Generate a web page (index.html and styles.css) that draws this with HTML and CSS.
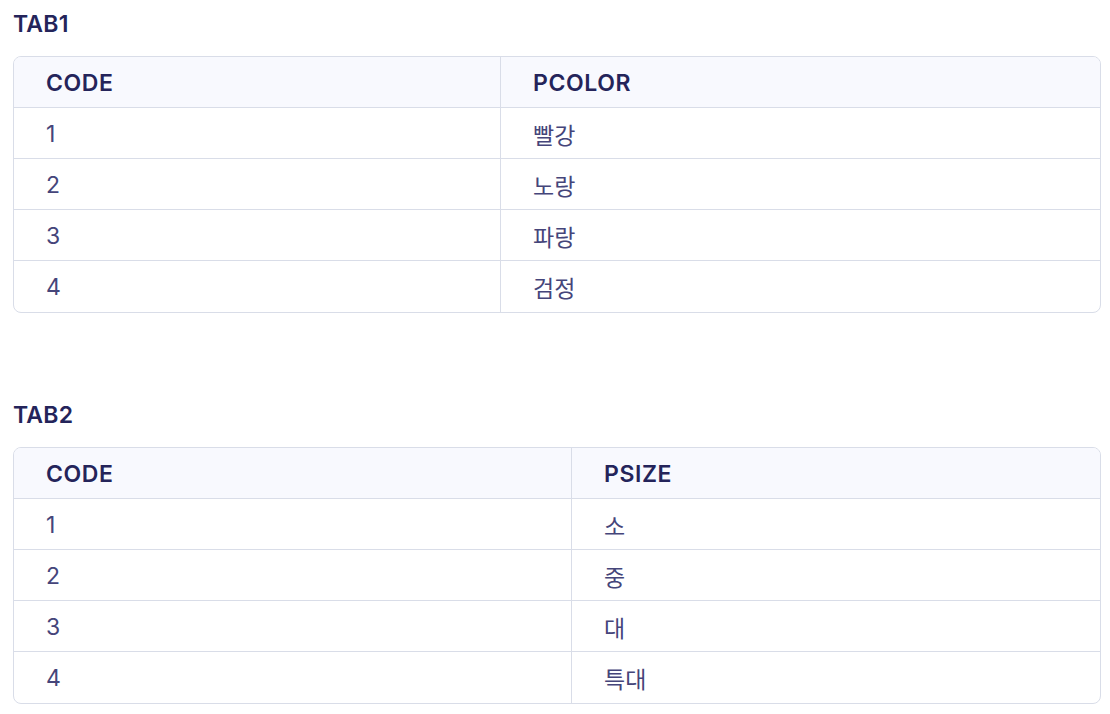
FILE: index.html
```html
<!DOCTYPE html>
<html lang="ko">
<head>
<meta charset="utf-8">
<title>Tables</title>
<link rel="stylesheet" href="styles.css">
</head>
<body>
<section class="block">
  <h2 class="title">TAB1</h2>
  <table class="grid">
    <colgroup><col class="c1 c1-tab1"><col></colgroup>
    <thead><tr><th>CODE</th><th>PCOLOR</th></tr></thead>
    <tbody>
      <tr><td>1</td><td>빨강</td></tr>
      <tr><td>2</td><td>노랑</td></tr>
      <tr><td>3</td><td>파랑</td></tr>
      <tr><td>4</td><td>검정</td></tr>
    </tbody>
  </table>
</section>
<section class="block block-2">
  <h2 class="title">TAB2</h2>
  <table class="grid">
    <colgroup><col class="c1 c1-tab2"><col></colgroup>
    <thead><tr><th>CODE</th><th>PSIZE</th></tr></thead>
    <tbody>
      <tr><td>1</td><td>소</td></tr>
      <tr><td>2</td><td>중</td></tr>
      <tr><td>3</td><td>대</td></tr>
      <tr><td>4</td><td>특대</td></tr>
    </tbody>
  </table>
</section>
</body>
</html>
```

FILE: styles.css
```css
html, body {
  margin: 0;
  padding: 0;
  background: #ffffff;
}
body {
  padding: 8px 9px 0 13px;
  font-family: Inter, "Noto Sans CJK KR", sans-serif;
  color: #44447a;
}
.block {
  display: flex;
  flex-direction: column;
}
.block-2 {
  margin-top: 86px;
}
.title {
  margin: 0 0 16px 0;
  font-size: 23px;
  line-height: 32px;
  font-weight: 600;
  color: #24245a;
  letter-spacing: 0.2px;
}
.grid {
  width: 100%;
  border-collapse: separate;
  border-spacing: 0;
  border: 1px solid #d9dde8;
  border-radius: 8px;
  overflow: hidden;
  table-layout: fixed;
}
.c1-tab1 { width: 486px; }
.c1-tab2 { width: 557px; }
.grid th,
.grid td {
  height: 51px;
  padding: 1px 0 0 32px;
  text-align: left;
  vertical-align: middle;
  border-bottom: 1px solid #d9dde8;
  font-size: 23px;
  box-sizing: border-box;
}
.grid th + th,
.grid td + td {
  border-left: 1px solid #d9dde8;
}
.grid th {
  background: #f8f9fe;
  color: #24245a;
  font-weight: 600;
  letter-spacing: 0.6px;
}
.grid td {
  color: #45457a;
  font-weight: 400;
}
.grid tbody tr:last-child td {
  border-bottom: none;
}
```
